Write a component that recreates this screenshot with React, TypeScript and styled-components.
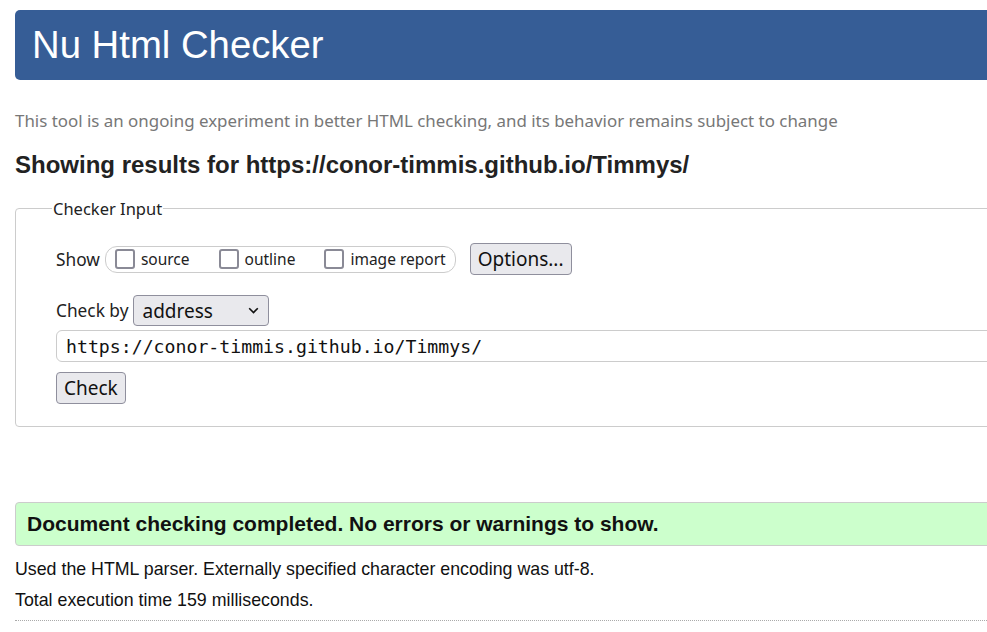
import React from "react";
import styled, { createGlobalStyle } from "styled-components";

const Global = createGlobalStyle`
  html, body { margin: 0; padding: 0; overflow: hidden; background: #fff; }
  body { font-family: "Liberation Sans", Arial, sans-serif; color: #222; }
`;

const Page = styled.div`
  width: 1200px;
  padding: 10px 0 0 15px;
  display: flex;
  flex-direction: column;
`;

const Header = styled.header`
  height: 70px;
  background: #365d96;
  border-radius: 5px;
  display: flex;
  align-items: center;
  padding-left: 17px;
`;

const Title = styled.h1`
  margin: 0;
  font-family: "Liberation Sans", Arial, sans-serif;
  font-weight: 400;
  font-size: 38.3px;
  color: #fff;
  line-height: 1;
`;

const Subtitle = styled.p`
  margin: 30px 0 0;
  font-family: "Noto Sans", "Open Sans", sans-serif;
  font-size: 16.9px;
  line-height: 22px;
  color: #777;
`;

const Results = styled.h2`
  margin: 18px 0 0;
  font-family: "Liberation Sans", Arial, sans-serif;
  font-weight: 700;
  font-size: 24px;
  line-height: 30px;
  color: #222;
`;

const Fieldset = styled.fieldset`
  margin: 17px 0 0;
  border: 1px solid #ccc;
  border-radius: 4px;
  padding: 14px 40px 22px 40px;
  font-family: "Noto Sans", "Open Sans", sans-serif;
  display: flex;
  flex-direction: column;
`;

const Legend = styled.legend`
  margin-left: -4px;
  padding: 0 1px;
  font-size: 16.5px;
  color: #222;
`;

const Row = styled.div<{ $mt?: number }>`
  display: flex;
  align-items: center;
  margin-top: ${(p) => p.$mt ?? 0}px;
`;

const Label = styled.span`
  font-size: 17.3px;
  color: #222;
  margin-right: 5px;
`;

const Group = styled.div`
  display: flex;
  align-items: center;
  border: 1px solid #ccc;
  border-radius: 12px;
  height: 25px;
  padding: 0 9px;
  gap: 29px;
`;

const CheckItem = styled.label`
  display: flex;
  align-items: center;
  gap: 6px;
  font-size: 15.5px;
  color: #222;
`;

const Box = styled.span`
  flex-shrink: 0;
  box-sizing: border-box;
  width: 20px;
  height: 20px;
  border: 2.5px solid #8a8a96;
  border-radius: 3px;
  background: #fff;
`;

const Button = styled.button<{ $ml?: number }>`
  font-family: "Noto Sans", "Open Sans", sans-serif;
  font-size: 19px;
  height: 32px;
  padding: 0 7px;
  background: #e9e9ed;
  border: 1px solid #8f8f9d;
  border-radius: 4px;
  color: #111;
  margin-left: ${(p) => p.$ml ?? 0}px;
  line-height: 1;
`;

const Select = styled.div`
  width: 136px;
  height: 31px;
  box-sizing: border-box;
  background: #e9e9ed;
  border: 1px solid #8f8f9d;
  border-radius: 4px;
  display: flex;
  align-items: center;
  justify-content: space-between;
  padding: 0 9px 0 8px;
  font-size: 19px;
  color: #111;
`;

const UrlInput = styled.div`
  margin-top: 4px;
  height: 32px;
  box-sizing: border-box;
  border: 1px solid #ccc;
  border-radius: 6px;
  display: flex;
  align-items: center;
  padding-left: 9px;
  font-family: "DejaVu Sans Mono", "Liberation Mono", monospace;
  font-size: 18.2px;
  color: #111;
`;

const Notice = styled.div`
  margin-top: 75px;
  height: 44px;
  box-sizing: border-box;
  background: #ccffcc;
  border: 1px solid #ccc;
  border-radius: 4px;
  display: flex;
  align-items: center;
  padding-left: 11px;
  font-family: "Liberation Sans", Arial, sans-serif;
  font-weight: 700;
  font-size: 21px;
  color: #111;
`;

const Info = styled.p<{ $mt: number }>`
  margin: ${(p) => p.$mt}px 0 0;
  font-family: "Liberation Sans", Arial, sans-serif;
  font-size: 17.8px;
  line-height: 22px;
  color: #111;
`;

const Rule = styled.hr`
  margin: 9px 0 0;
  border: 0;
  border-top: 1px dotted #aaa;
`;

const Chevron = () => (
  <svg width="11" height="7" viewBox="0 0 11 7">
    <path d="M1.2 1.2 L5.5 5.5 L9.8 1.2" fill="none" stroke="#111" strokeWidth="1.6" />
  </svg>
);

export default function App() {
  return (
    <Page>
      <Global />
      <Header>
        <Title>Nu Html Checker</Title>
      </Header>
      <Subtitle>
        This tool is an ongoing experiment in better HTML checking, and its behavior remains subject to change
      </Subtitle>
      <Results>Showing results for https://conor-timmis.github.io/Timmys/</Results>
      <Fieldset>
        <Legend>Checker Input</Legend>
        <Row $mt={9}>
          <Label>Show</Label>
          <Group>
            <CheckItem>
              <Box />
              source
            </CheckItem>
            <CheckItem>
              <Box />
              outline
            </CheckItem>
            <CheckItem>
              <Box />
              image report
            </CheckItem>
          </Group>
          <Button $ml={14}>Options...</Button>
        </Row>
        <Row $mt={20}>
          <Label>Check by</Label>
          <Select>
            <span>address</span>
            <Chevron />
          </Select>
        </Row>
        <UrlInput>https://conor-timmis.github.io/Timmys/</UrlInput>
        <Row $mt={10}>
          <Button>Check</Button>
        </Row>
      </Fieldset>
      <Notice>Document checking completed. No errors or warnings to show.</Notice>
      <Info $mt={12}>Used the HTML parser. Externally specified character encoding was utf-8.</Info>
      <Info $mt={9}>Total execution time 159 milliseconds.</Info>
      <Rule />
    </Page>
  );
}
